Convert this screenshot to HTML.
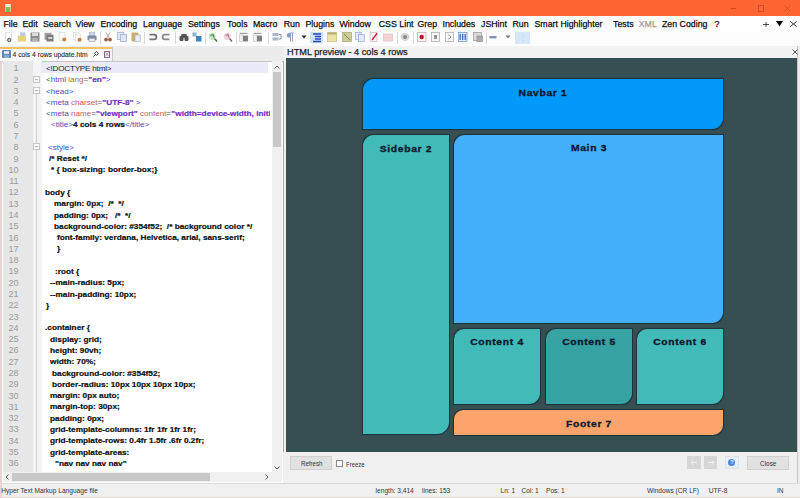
<!DOCTYPE html>
<html><head><meta charset="utf-8">
<style>
*{margin:0;padding:0;box-sizing:border-box}
html,body{width:800px;height:498px;overflow:hidden}
body{position:relative;background:#f0f0f0;font-family:"Liberation Sans",sans-serif;color:#1e1e1e}
.a{position:absolute}
.t{position:absolute;white-space:pre;line-height:1;-webkit-text-stroke:0.25px currentColor}
#title{left:0;top:0;width:800px;height:16.3px;background:#fe6532}
#menu{left:0;top:16px;width:800px;height:15px;background:#fefefe}
#menu .t{font-size:8.8px;top:19.6px;color:#1a1a1a}
#tool{left:0;top:31px;width:800px;height:14.5px;background:#fdfdfd}
.ic{position:absolute;top:33px;width:9px;height:9px}
#tabbar{left:0;top:45.5px;width:284px;height:15px;background:#ececec}
#tab{left:0;top:46.5px;width:112px;height:14.5px;background:#fafafa;border-top:2px solid #f2c264}
#prevhdr{left:283px;top:45.5px;width:517px;height:12.5px;background:#f2f2f2}
#editor{left:0;top:60.5px;width:284px;height:423px;background:#fff;border-top:1px solid #c4c4c4;border-right:1px solid #a4a4a4;border-bottom:1px solid #a4a4a4}
#lnm{left:3px;top:61px;width:30px;height:411px;background:#e7e7e7}
#fold{left:33px;top:61px;width:9px;height:411px;background:#f4f4f4}
#cur{left:41px;top:61.8px;width:227px;height:11.6px;background:#eaeaf8}
.ln{position:absolute;left:3px;width:15.5px;text-align:right;font-size:9px;color:#9a9a9a;line-height:1}
.cl{position:absolute;white-space:pre;font-size:8px;line-height:1;color:#111;font-weight:bold;transform:scaleX(1.032);transform-origin:0 0;-webkit-text-stroke:0.22px currentColor}
.tg{color:#4c4cbc;font-weight:normal;font-size:7.85px;-webkit-text-stroke:0}
.at{color:#c85a5a;font-weight:normal;font-size:7.85px;-webkit-text-stroke:0}
.eq{color:#555;font-weight:normal;font-size:7.85px;-webkit-text-stroke:0}
.vl{color:#7430c8;font-weight:bold;font-size:8px}
.nm{color:#222;font-weight:normal;letter-spacing:-0.2px;font-size:7.85px;-webkit-text-stroke:0}
#vsb{left:272px;top:61px;width:10px;height:411px;background:#f0f0f0}
#vth{left:273px;top:72px;width:8px;height:75px;background:#c8c8c8}
#hsb{left:3px;top:472px;width:279px;height:10px;background:#f0f0f0}
#hth{left:12px;top:473px;width:198px;height:8px;background:#c8c8c8}
#preview{left:286px;top:58px;width:511px;height:394px;background:#354f52}
.bx{position:absolute;font-family:"Liberation Sans",sans-serif;font-weight:bold;font-size:9.8px;color:#0c1a2e;-webkit-text-stroke:0.35px currentColor;text-align:center;letter-spacing:0.65px;transform:scaleX(1.05)}
#bottom{left:283px;top:452px;width:517px;height:31px;background:#f0f0f0}
.btn{position:absolute;background:#e1e1e1;border:1px solid #d4d4d4}
#status{left:0;top:483px;width:800px;height:15px;background:#f0f0f0;border-top:1px solid #dadada}
.st{position:absolute;white-space:pre;font-size:6.6px;line-height:1;color:#333;top:488.5px}
</style></head><body>
<div id="title" class="a"></div>
<div id="menu" class="a"></div>
<div id="tool" class="a"></div>
<div id="tabbar" class="a"></div>
<div id="tab" class="a"></div>
<div id="prevhdr" class="a"></div>
<div class="t" style="left:287px;top:48px;font-size:9.2px;color:#222">HTML preview - 4 cols 4 rows</div>
<div id="editor" class="a"></div>
<div id="lnm" class="a"></div>
<div id="fold" class="a"></div>
<div id="cur" class="a"></div>
<div class="a" style="left:0;top:61px;width:270px;height:411px;overflow:hidden">
<div class="ln" style="top:3.28px">1</div>
<div class="ln" style="top:14.57px">2</div>
<div class="ln" style="top:25.85px">3</div>
<div class="ln" style="top:37.14px">4</div>
<div class="ln" style="top:48.42px">5</div>
<div class="ln" style="top:59.71px">6</div>
<div class="ln" style="top:70.99px">7</div>
<div class="ln" style="top:82.28px">8</div>
<div class="ln" style="top:93.56px">9</div>
<div class="ln" style="top:104.85px">10</div>
<div class="ln" style="top:116.13px">11</div>
<div class="ln" style="top:127.42px">12</div>
<div class="ln" style="top:138.70px">13</div>
<div class="ln" style="top:149.99px">14</div>
<div class="ln" style="top:161.27px">15</div>
<div class="ln" style="top:172.56px">16</div>
<div class="ln" style="top:183.84px">17</div>
<div class="ln" style="top:195.13px">18</div>
<div class="ln" style="top:206.41px">19</div>
<div class="ln" style="top:217.70px">20</div>
<div class="ln" style="top:228.98px">21</div>
<div class="ln" style="top:240.27px">22</div>
<div class="ln" style="top:251.55px">23</div>
<div class="ln" style="top:262.84px">24</div>
<div class="ln" style="top:274.12px">25</div>
<div class="ln" style="top:285.41px">26</div>
<div class="ln" style="top:296.69px">27</div>
<div class="ln" style="top:307.98px">28</div>
<div class="ln" style="top:319.26px">29</div>
<div class="ln" style="top:330.55px">30</div>
<div class="ln" style="top:341.83px">31</div>
<div class="ln" style="top:353.12px">32</div>
<div class="ln" style="top:364.40px">33</div>
<div class="ln" style="top:375.69px">34</div>
<div class="ln" style="top:386.97px">35</div>
<div class="ln" style="top:398.26px">36</div>
<div class="ln" style="top:409.54px">37</div>
<div class="cl" style="left:46px;top:3.93px"><span class="nm">&lt;!DOCTYPE html&gt;</span></div>
<div class="cl" style="left:46px;top:15.21px"><span class="tg">&lt;html</span><span class="at"> lang</span><span class="eq">=</span><span class="vl">&quot;en&quot;</span><span class="tg">&gt;</span></div>
<div class="cl" style="left:46px;top:26.50px"><span class="tg">&lt;head&gt;</span></div>
<div class="cl" style="left:46px;top:37.78px"><span class="tg">&lt;meta</span><span class="at"> charset</span><span class="eq">=</span><span class="vl">&quot;UTF-8&quot;</span><span class="tg"> &gt;</span></div>
<div class="cl" style="left:46px;top:49.07px"><span class="tg">&lt;meta</span><span class="at"> name</span><span class="eq">=</span><span class="vl">&quot;viewport&quot;</span><span class="at"> content</span><span class="eq">=</span><span class="vl">&quot;width=device-width, initial-scale=1.0&quot;</span><span class="tg">&gt;</span></div>
<div class="cl" style="left:50.5px;top:60.35px"><span class="tg">&lt;title&gt;</span>4 cols 4 rows<span class="tg">&lt;/title&gt;</span></div>
<div class="cl" style="left:47.5px;top:82.92px"><span class="tg">&lt;style&gt;</span></div>
<div class="cl" style="left:49px;top:94.21px">/* Reset */</div>
<div class="cl" style="left:50.5px;top:105.49px">* { box-sizing: border-box;}</div>
<div class="cl" style="left:45.4px;top:128.06px">body {</div>
<div class="cl" style="left:54.4px;top:139.35px">margin: 0px;  /*  */</div>
<div class="cl" style="left:54.4px;top:150.63px">padding: 0px;   /*  */</div>
<div class="cl" style="left:54.4px;top:161.92px">background-color: #354f52;  /* background color */</div>
<div class="cl" style="left:56.5px;top:173.20px">font-family: verdana, Helvetica, arial, sans-serif;</div>
<div class="cl" style="left:57px;top:184.49px">}</div>
<div class="cl" style="left:55px;top:207.06px">:root {</div>
<div class="cl" style="left:50px;top:218.34px">--main-radius: 5px;</div>
<div class="cl" style="left:50px;top:229.63px">--main-padding: 10px;</div>
<div class="cl" style="left:45.5px;top:240.91px">}</div>
<div class="cl" style="left:45.4px;top:263.48px">.container {</div>
<div class="cl" style="left:50px;top:274.77px">display: grid;</div>
<div class="cl" style="left:50px;top:286.05px">height: 90vh;</div>
<div class="cl" style="left:50px;top:297.34px">width: 70%;</div>
<div class="cl" style="left:51.5px;top:308.62px">background-color: #354f52;</div>
<div class="cl" style="left:51.5px;top:319.91px">border-radius: 10px 10px 10px 10px;</div>
<div class="cl" style="left:50px;top:331.19px">margin: 0px auto;</div>
<div class="cl" style="left:50px;top:342.48px">margin-top: 30px;</div>
<div class="cl" style="left:50px;top:353.76px">padding: 0px;</div>
<div class="cl" style="left:50px;top:365.05px">grid-template-columns: 1fr 1fr 1fr 1fr;</div>
<div class="cl" style="left:50px;top:376.33px">grid-template-rows: 0.4fr 1.5fr .6fr 0.2fr;</div>
<div class="cl" style="left:50px;top:387.62px">grid-template-areas:</div>
<div class="cl" style="left:55px;top:398.90px">&quot;nav nav nav nav&quot;</div>
<div class="cl" style="left:55px;top:410.19px">&quot;sidebar main main main&quot;</div>
</div>
<div id="vsb" class="a"></div>
<div id="vth" class="a"></div>
<div id="hsb" class="a"></div>
<div id="hth" class="a"></div>
<div id="preview" class="a"></div>
<div class="a" style="left:362.5px;top:78.5px;width:360.7px;height:50.8px;background:#0399fb;border-radius:11px 0 11px 0;box-shadow:0 0 0.8px 0.5px rgba(8,28,44,0.55)"></div>
<div class="bx" style="left:482.9px;width:120px;top:88.00px;line-height:1">Navbar 1</div>
<div class="a" style="left:362.7px;top:134.8px;width:85.9px;height:299.7px;background:#42bab8;border-radius:11px 0 12px 0;box-shadow:0 0 0.8px 0.5px rgba(8,28,44,0.55)"></div>
<div class="bx" style="left:345.6px;width:120px;top:143.50px;line-height:1">Sidebar 2</div>
<div class="a" style="left:454.3px;top:134.6px;width:268.9px;height:188.4px;background:#44b0fc;border-radius:11px 0 11px 0;box-shadow:0 0 0.8px 0.5px rgba(8,28,44,0.55)"></div>
<div class="bx" style="left:528.8px;width:120px;top:143.30px;line-height:1">Main 3</div>
<div class="a" style="left:454.3px;top:328.7px;width:85.7px;height:75.3px;background:#42bab8;border-radius:10px 0 11px 0;box-shadow:0 0 0.8px 0.5px rgba(8,28,44,0.55)"></div>
<div class="bx" style="left:437.1px;width:120px;top:337.40px;line-height:1">Content 4</div>
<div class="a" style="left:545.7px;top:328.6px;width:86.6px;height:75.5px;background:#38a3a3;border-radius:10px 0 11px 0;box-shadow:0 0 0.8px 0.5px rgba(8,28,44,0.55)"></div>
<div class="bx" style="left:529.0px;width:120px;top:337.30px;line-height:1">Content 5</div>
<div class="a" style="left:637.3px;top:328.6px;width:85.9px;height:75.4px;background:#42bab8;border-radius:10px 0 11px 0;box-shadow:0 0 0.8px 0.5px rgba(8,28,44,0.55)"></div>
<div class="bx" style="left:620.2px;width:120px;top:337.30px;line-height:1">Content 6</div>
<div class="a" style="left:454.3px;top:410.0px;width:268.9px;height:24.5px;background:#fca46c;border-radius:9.5px 0 10px 0;box-shadow:0 0 0.8px 0.5px rgba(8,28,44,0.55)"></div>
<div class="bx" style="left:528.8px;width:120px;top:418.70px;line-height:1">Footer 7</div>
<div id="bottom" class="a"></div>
<div id="status" class="a"></div>
<div class="a" style="left:0;top:496.5px;width:800px;height:1.5px;background:#ead8d2"></div>
<div class="a" style="left:797px;top:46px;width:3px;height:437px;background:#f2eaea;border-left:1px solid #c8c8c8"></div>
<div class="a" style="left:0;top:61px;width:2.2px;height:437px;background:#e8d4d4"></div>
<div class="t" style="left:1.2px;top:488.21px;font-size:6.6px;color:#333;-webkit-text-stroke:0">Hyper Text Markup Language file</div>
<div class="t" style="left:375.6px;top:488.21px;font-size:6.6px;color:#333;-webkit-text-stroke:0">length: 3,414</div>
<div class="t" style="left:422px;top:488.21px;font-size:6.6px;color:#333;-webkit-text-stroke:0">lines: 153</div>
<div class="t" style="left:500.5px;top:488.21px;font-size:6.6px;color:#333;-webkit-text-stroke:0">Ln: 1</div>
<div class="t" style="left:521.5px;top:488.21px;font-size:6.6px;color:#333;-webkit-text-stroke:0">Col: 1</div>
<div class="t" style="left:546px;top:488.21px;font-size:6.6px;color:#333;-webkit-text-stroke:0">Pos: 1</div>
<div class="t" style="left:647px;top:488.21px;font-size:6.6px;color:#333;-webkit-text-stroke:0">Windows (CR LF)</div>
<div class="t" style="left:708.75px;top:488.21px;font-size:6.6px;color:#333;-webkit-text-stroke:0">UTF-8</div>
<div class="t" style="left:777px;top:488.21px;font-size:6.6px;color:#333;-webkit-text-stroke:0">IN</div>
<div class="a" style="left:5px;top:4px;width:6px;height:8px;background:linear-gradient(#fff2dc 0,#fff2dc 32%,#86c45a 32%,#78b84c 100%);border-left:0.6px solid #e8c8a0;border-right:0.6px solid #e8c8a0"></div>
<div class="a" style="left:731px;top:8.2px;width:5px;height:0.8px;background:#c8502a"></div>
<div class="a" style="left:757.5px;top:4.5px;width:6px;height:7px;border:0.8px solid #c8502a"></div>
<svg class="a" style="left:784px;top:5px" width="7" height="7" viewBox="0 0 7 7"><path d="M0.5 0.5L6.5 6.5M6.5 0.5L0.5 6.5" stroke="#c8502a" stroke-width="0.8"/></svg>
<div class="a" style="left:99.5px;top:32px;width:1px;height:12px;background:#d8d8d8"></div>
<div class="a" style="left:144.4px;top:32px;width:1px;height:12px;background:#d8d8d8"></div>
<div class="a" style="left:175px;top:32px;width:1px;height:12px;background:#d8d8d8"></div>
<div class="a" style="left:205px;top:32px;width:1px;height:12px;background:#d8d8d8"></div>
<div class="a" style="left:236px;top:32px;width:1px;height:12px;background:#d8d8d8"></div>
<div class="a" style="left:267.6px;top:32px;width:1px;height:12px;background:#d8d8d8"></div>
<div class="a" style="left:397px;top:32px;width:1px;height:12px;background:#d8d8d8"></div>
<div class="a" style="left:413px;top:32px;width:1px;height:12px;background:#d8d8d8"></div>
<div class="a" style="left:486px;top:32px;width:1px;height:12px;background:#d8d8d8"></div>
<svg class="a" style="left:3.8px;top:32px" width="10" height="10" viewBox="0 0 10 10"><rect x="1.5" y="0.5" width="6" height="8" fill="#fff" stroke="#cfcfcf" stroke-width="0.6"/><circle cx="5.2" cy="8" r="1.5" fill="#fff" stroke="#6e6e6e" stroke-width="1.3"/></svg>
<svg class="a" style="left:16.9px;top:32px" width="10" height="10" viewBox="0 0 10 10"><rect x="3" y="0.3" width="5.5" height="6" fill="#c4c8e6"/><path d="M0.8 3.5H4L5 4.5H9V9.5H0.8Z" fill="#e8d274"/></svg>
<svg class="a" style="left:30.3px;top:32px" width="10" height="10" viewBox="0 0 10 10"><rect x="0.5" y="0.5" width="9" height="9" fill="#8c8c8c"/><rect x="2" y="0.8" width="6" height="3.2" fill="#dcdcdc"/><rect x="2.3" y="6" width="5.4" height="3.2" fill="#b4b4b4"/></svg>
<svg class="a" style="left:43.9px;top:32px" width="10" height="10" viewBox="0 0 10 10"><rect x="0.5" y="0.8" width="7" height="7" fill="#a4a4a4"/><rect x="2.5" y="2.8" width="7" height="6.7" fill="#7c7c7c"/><rect x="4.2" y="5" width="4" height="2" fill="#d4d4d4"/></svg>
<svg class="a" style="left:58.2px;top:32px" width="10" height="10" viewBox="0 0 10 10"><rect x="1" y="0.5" width="6" height="8" fill="#fbfbfb" stroke="#d4d4d4" stroke-width="0.6"/><circle cx="6.3" cy="7.6" r="2" fill="#c8803e"/></svg>
<svg class="a" style="left:72.5px;top:32px" width="10" height="10" viewBox="0 0 10 10"><rect x="0.6" y="0.5" width="5" height="7" fill="#fbfbfb" stroke="#d4d4d4" stroke-width="0.6"/><rect x="2.4" y="2" width="5" height="7" fill="#fbfbfb" stroke="#d4d4d4" stroke-width="0.6"/><circle cx="6.6" cy="7.8" r="2" fill="#c8803e"/></svg>
<svg class="a" style="left:86.5px;top:32px" width="10" height="10" viewBox="0 0 10 10"><rect x="2.2" y="0.5" width="5.6" height="3.5" fill="#c8d4e6" stroke="#9aa8bc" stroke-width="0.5"/><rect x="0.5" y="3.6" width="9" height="4.6" fill="#7c8ca4"/><rect x="2" y="6.2" width="6" height="3.3" fill="#ececec" stroke="#8a8a8a" stroke-width="0.5"/></svg>
<svg class="a" style="left:102.8px;top:32px" width="10" height="10" viewBox="0 0 10 10"><path d="M3 0.5L6.2 6M7 0.5L3.8 6" stroke="#a49494" stroke-width="0.8"/><circle cx="3" cy="7.6" r="1.9" fill="#9c5c46"/><circle cx="7" cy="7.6" r="1.9" fill="#9c5c46"/></svg>
<svg class="a" style="left:116.8px;top:32px" width="10" height="10" viewBox="0 0 10 10"><rect x="0.5" y="0.5" width="6" height="7" fill="#dce6f4" stroke="#98aecc" stroke-width="0.7"/><rect x="3.5" y="2.5" width="6" height="7" fill="#dce6f4" stroke="#98aecc" stroke-width="0.7"/></svg>
<svg class="a" style="left:131.0px;top:32px" width="10" height="10" viewBox="0 0 10 10"><rect x="0.5" y="0.5" width="7" height="9" rx="1" fill="#d4aa6c"/><rect x="4" y="3" width="5.5" height="6.5" fill="#e6eef8" stroke="#98aecc" stroke-width="0.6"/></svg>
<svg class="a" style="left:148.3px;top:32px" width="10" height="10" viewBox="0 0 10 10"><path d="M1.5 2.6H6A2.4 2.4 0 0 1 6 7.4H1.5" fill="none" stroke="#747474" stroke-width="1.8"/></svg>
<svg class="a" style="left:161.0px;top:32px" width="10" height="10" viewBox="0 0 10 10"><path d="M8.5 2.6H4A2.4 2.4 0 0 0 4 7.4H8.5" fill="none" stroke="#8a8a8a" stroke-width="1.8"/></svg>
<svg class="a" style="left:178.5px;top:32px" width="10" height="10" viewBox="0 0 10 10"><rect x="0.5" y="4" width="4" height="5" rx="1" fill="#545454"/><rect x="5.5" y="4" width="4" height="5" rx="1" fill="#545454"/><rect x="2.2" y="2" width="5.6" height="4" rx="1" fill="#545454"/></svg>
<svg class="a" style="left:191.8px;top:32px" width="10" height="10" viewBox="0 0 10 10"><rect x="0.5" y="0.5" width="4" height="4" fill="#8ab4d8"/><rect x="4" y="4" width="5.5" height="5.5" fill="#3c84bc"/></svg>
<svg class="a" style="left:208.0px;top:32px" width="10" height="10" viewBox="0 0 10 10"><circle cx="4.2" cy="4.5" r="3.4" fill="#c4e0c4"/><path d="M2.5 3.5L5 2.5L6 5.5" stroke="#4c8c50" stroke-width="1.3" fill="none"/><path d="M6.5 6.5L9 9.5" stroke="#3c6c40" stroke-width="1.3"/></svg>
<svg class="a" style="left:222.8px;top:32px" width="10" height="10" viewBox="0 0 10 10"><circle cx="4.2" cy="4.5" r="3.4" fill="#e8d4dc"/><path d="M2.5 3.5L5 2.5L6 5.5" stroke="#c07080" stroke-width="1.3" fill="none"/><path d="M6.5 6.5L9 9.5" stroke="#905060" stroke-width="1.3"/></svg>
<svg class="a" style="left:239.3px;top:32px" width="10" height="10" viewBox="0 0 10 10"><rect x="0.5" y="0.8" width="8" height="1.2" fill="#a0a0a0"/><rect x="0.5" y="3" width="3.5" height="6.3" fill="#f2f2f2" stroke="#b4b4b4" stroke-width="0.5"/><rect x="4" y="3.6" width="5" height="5.8" fill="#808080"/></svg>
<svg class="a" style="left:253.0px;top:32px" width="10" height="10" viewBox="0 0 10 10"><rect x="0.5" y="0.8" width="8" height="1.2" fill="#a0a0a0"/><rect x="0.5" y="3" width="3.5" height="6.3" fill="#f2f2f2" stroke="#b4b4b4" stroke-width="0.5"/><rect x="4" y="3.6" width="5" height="5.8" fill="#808080"/></svg>
<svg class="a" style="left:271.5px;top:32px" width="10" height="10" viewBox="0 0 10 10"><rect x="0.5" y="1" width="6" height="3" fill="#a8b6ca"/><rect x="0.5" y="5.5" width="6" height="3" fill="#a8b6ca"/><path d="M7 2.5H9V7H7" stroke="#8090a8" fill="none"/></svg>
<svg class="a" style="left:284.5px;top:32px" width="10" height="10" viewBox="0 0 10 10"><path d="M4.5 1H8.5M5.5 1V9.5M7.5 1V9.5" stroke="#8ea0bc" stroke-width="1"/><circle cx="4" cy="3.4" r="2.3" fill="#8ea0bc"/></svg>
<svg class="a" style="left:298.5px;top:32px" width="10" height="10" viewBox="0 0 10 10"><path d="M2.5 3.5H7.5L5 6.5Z" fill="#222"/></svg>
<div class="a" style="left:310px;top:32px;width:12.5px;height:11px;background:#cce2f6"></div>
<svg class="a" style="left:311.5px;top:32.5px" width="10" height="10" viewBox="0 0 10 10"><path d="M1 1H9M3 3.5H9M3 6H9M1 8.5H9" stroke="#2846c0" stroke-width="1.3"/></svg>
<svg class="a" style="left:327.2px;top:32px" width="10" height="10" viewBox="0 0 10 10"><rect x="0.5" y="0.5" width="9" height="9" fill="#ece2a4" stroke="#c8ba7c" stroke-width="0.7"/><rect x="0.5" y="0.5" width="9" height="2" fill="#bcae74"/></svg>
<svg class="a" style="left:341.5px;top:32px" width="10" height="10" viewBox="0 0 10 10"><rect x="0.5" y="0.5" width="9" height="9" fill="#cacc94" stroke="#a4a674" stroke-width="0.7"/><path d="M2 2L8 8" stroke="#8a8c56" stroke-width="1"/></svg>
<svg class="a" style="left:355.0px;top:32px" width="10" height="10" viewBox="0 0 10 10"><rect x="0.5" y="0.5" width="6" height="7" fill="#e2eaf8" stroke="#94acd8" stroke-width="0.7"/><rect x="3.5" y="2.5" width="6" height="7" fill="#e2eaf8" stroke="#94acd8" stroke-width="0.7"/></svg>
<svg class="a" style="left:369.0px;top:32px" width="10" height="10" viewBox="0 0 10 10"><rect x="1" y="0.5" width="7" height="9" fill="#faf5f5" stroke="#c4acac" stroke-width="0.6"/><path d="M8 1.2L3.2 8" stroke="#c43434" stroke-width="1.5"/></svg>
<svg class="a" style="left:382.5px;top:32px" width="10" height="10" viewBox="0 0 10 10"><rect x="0.5" y="2" width="9" height="7" fill="#f2d4d4" stroke="#e2b6b6" stroke-width="0.6"/></svg>
<svg class="a" style="left:400.2px;top:32px" width="10" height="10" viewBox="0 0 10 10"><ellipse cx="5" cy="5" rx="4.5" ry="4" fill="#d4d4d4"/><circle cx="5" cy="5" r="2" fill="#8c8c8c"/></svg>
<svg class="a" style="left:416.7px;top:32px" width="10" height="10" viewBox="0 0 10 10"><rect x="0.5" y="0.5" width="8.5" height="9" fill="#f8f2f2" stroke="#cca4a4" stroke-width="0.7"/><circle cx="4.7" cy="5" r="2.2" fill="#c0102a"/></svg>
<svg class="a" style="left:431.0px;top:32px" width="10" height="10" viewBox="0 0 10 10"><rect x="0.5" y="0.5" width="8" height="9" fill="#f6f6f6" stroke="#a4a4a4" stroke-width="0.7"/><rect x="3" y="3" width="3" height="4" fill="#949494"/></svg>
<svg class="a" style="left:444.6px;top:32px" width="10" height="10" viewBox="0 0 10 10"><rect x="0.5" y="0.5" width="8" height="9" fill="#f6f6f6" stroke="#a4a4a4" stroke-width="0.7"/><path d="M3.3 2.8L6 5L3.3 7.2" stroke="#808080" stroke-width="0.9" fill="none"/></svg>
<svg class="a" style="left:458.2px;top:32px" width="10" height="10" viewBox="0 0 10 10"><rect x="0.5" y="0.5" width="8.5" height="9" fill="#dfe8f6" stroke="#7492c8" stroke-width="0.7"/><path d="M2.2 2V8M4.7 2V8M7.2 2V8" stroke="#3c64b0" stroke-width="1.2"/></svg>
<svg class="a" style="left:473.0px;top:32px" width="10" height="10" viewBox="0 0 10 10"><rect x="0.5" y="0.5" width="8" height="8" fill="#dadada" stroke="#949494" stroke-width="0.7"/><rect x="4" y="4" width="5.5" height="5.5" fill="#acacac" stroke="#848484" stroke-width="0.6"/></svg>
<svg class="a" style="left:488.5px;top:32px" width="10" height="10" viewBox="0 0 10 10"><rect x="0.5" y="4" width="7" height="2.4" fill="#7c94b4"/></svg>
<svg class="a" style="left:502.5px;top:32px" width="10" height="10" viewBox="0 0 10 10"><path d="M2.5 3.5H7.5L5 6.5Z" fill="#7a7a7a"/></svg>
<div class="a" style="left:515.4px;top:32px;width:14.600000000000023px;height:12px;background:#d6e8f8"></div>
<svg class="a" style="left:517.9px;top:33px" width="10" height="10" viewBox="0 0 10 10"><path d="M5 1V9" stroke="#a8c0d8" stroke-width="0.6" stroke-dasharray="1 1"/></svg>
<div class="a" style="left:2.2px;top:50px;width:9px;height:8.3px;background:#5a86b4;border-radius:1px"></div>
<div class="a" style="left:4px;top:50.5px;width:5.4px;height:3px;background:#dfe8f2"></div>
<div class="a" style="left:4px;top:55.3px;width:5.4px;height:3px;background:#8aaed0"></div>
<svg class="a" style="left:93px;top:51px" width="6" height="6" viewBox="0 0 6 6"><path d="M0.5 5.5L2.5 3.5M1.5 2.5L3.5 0.5L5.5 2.5L3.5 4.5Z" stroke="#333" stroke-width="0.9" fill="none"/></svg>
<div class="a" style="left:104px;top:51px;width:6px;height:6.5px;border:1px solid #8a6a8a;background:#f6eef6"></div>
<svg class="a" style="left:105px;top:52px" width="4" height="4.5"><path d="M0.3 0.3L3.7 4.2M3.7 0.3L0.3 4.2" stroke="#9a7a9a" stroke-width="0.7"/></svg>
<div class="a" style="left:112px;top:47px;width:1px;height:14px;background:#c8c8c8"></div>
<div class="a" style="left:36.3px;top:92.97000000000001px;width:1px;height:379.03px;background:#cfcfcf"></div>
<div class="a" style="left:33px;top:75.585px;width:7px;height:7px;border:1px solid #c6c6c6;background:#fbfbfb"></div>
<div class="a" style="left:34.8px;top:78.585px;width:3.5px;height:1px;background:#b4b4b4"></div>
<div class="a" style="left:33px;top:86.87px;width:7px;height:7px;border:1px solid #c6c6c6;background:#fbfbfb"></div>
<div class="a" style="left:34.8px;top:89.87px;width:3.5px;height:1px;background:#b4b4b4"></div>
<div class="a" style="left:33px;top:143.295px;width:7px;height:7px;border:1px solid #c6c6c6;background:#fbfbfb"></div>
<div class="a" style="left:34.8px;top:146.295px;width:3.5px;height:1px;background:#b4b4b4"></div>
<svg class="a" style="left:274px;top:65px" width="6" height="4"><path d="M0.5 3.5L3 1L5.5 3.5" stroke="#555" fill="none"/></svg>
<svg class="a" style="left:274px;top:466px" width="6" height="4"><path d="M0.5 0.5L3 3L5.5 0.5" stroke="#555" fill="none"/></svg>
<svg class="a" style="left:5px;top:474px" width="4" height="6"><path d="M3.5 0.5L1 3L3.5 5.5" stroke="#555" fill="none"/></svg>
<svg class="a" style="left:265px;top:474px" width="4" height="6"><path d="M0.5 0.5L3 3L0.5 5.5" stroke="#555" fill="none"/></svg>
<svg class="a" style="left:791.5px;top:49px" width="6" height="6"><path d="M0.5 0.5L5.5 5.5M5.5 0.5L0.5 5.5" stroke="#444" stroke-width="0.9"/></svg>
<div class="a" style="left:290.2px;top:456.2px;width:41.5px;height:13.4px;background:#e1e1e1;border:1px solid #d0d0d0"></div>
<div class="a" style="left:336px;top:459.7px;width:7.3px;height:7.5px;background:#fff;border:1px solid #8a8a8a"></div>
<div class="a" style="left:687px;top:456px;width:13.5px;height:13px;background:#d6d6d6"></div>
<svg class="a" style="left:690px;top:459px" width="8" height="7"><path d="M1 3.5H7M3.5 1L1 3.5L3.5 6" stroke="#eee" stroke-width="1" fill="none"/></svg>
<div class="a" style="left:704px;top:456px;width:13px;height:13px;background:#d6d6d6"></div>
<svg class="a" style="left:706.5px;top:459px" width="8" height="7"><path d="M1 3.5H7M4.5 1L7 3.5L4.5 6" stroke="#eee" stroke-width="1" fill="none"/></svg>
<div class="a" style="left:725px;top:456px;width:13.5px;height:13px;background:#e8eef6;border:1px solid #dde3ea"></div>
<div class="a" style="left:728.3px;top:459.2px;width:7px;height:7px;background:#4a86dc;border-radius:50%"></div>
<div class="a" style="left:746.7px;top:456px;width:42px;height:13.5px;background:#e1e1e1;border:1px solid #d0d0d0"></div>
<div class="t" style="left:3.5px;top:19.55px;font-size:8.8px;color:#0e0e0e">File</div>
<div class="t" style="left:22.5px;top:19.55px;font-size:8.8px;color:#0e0e0e">Edit</div>
<div class="t" style="left:43px;top:19.55px;font-size:8.8px;color:#0e0e0e">Search</div>
<div class="t" style="left:75.5px;top:19.55px;font-size:8.8px;color:#0e0e0e">View</div>
<div class="t" style="left:100.5px;top:19.55px;font-size:8.8px;color:#0e0e0e">Encoding</div>
<div class="t" style="left:143px;top:19.55px;font-size:8.8px;color:#0e0e0e">Language</div>
<div class="t" style="left:188px;top:19.55px;font-size:8.8px;color:#0e0e0e">Settings</div>
<div class="t" style="left:227px;top:19.55px;font-size:8.8px;color:#0e0e0e">Tools</div>
<div class="t" style="left:253px;top:19.55px;font-size:8.8px;color:#0e0e0e">Macro</div>
<div class="t" style="left:283.75px;top:19.55px;font-size:8.8px;color:#0e0e0e">Run</div>
<div class="t" style="left:305.5px;top:19.55px;font-size:8.8px;color:#0e0e0e">Plugins</div>
<div class="t" style="left:339.5px;top:19.55px;font-size:8.8px;color:#0e0e0e">Window</div>
<div class="t" style="left:378.75px;top:19.55px;font-size:8.8px;color:#0e0e0e">CSS Lint</div>
<div class="t" style="left:417.5px;top:19.55px;font-size:8.8px;color:#0e0e0e">Grep</div>
<div class="t" style="left:442.5px;top:19.55px;font-size:8.8px;color:#0e0e0e">Includes</div>
<div class="t" style="left:481px;top:19.55px;font-size:8.8px;color:#0e0e0e">JSHint</div>
<div class="t" style="left:512.5px;top:19.55px;font-size:8.8px;color:#0e0e0e">Run</div>
<div class="t" style="left:534.5px;top:19.55px;font-size:8.8px;color:#0e0e0e">Smart Highlighter</div>
<div class="t" style="left:613px;top:19.55px;font-size:8.8px;color:#0e0e0e">Tests</div>
<div class="t" style="left:638.75px;top:19.55px;font-size:8.8px;color:#9a9a9a">XML</div>
<div class="t" style="left:662px;top:19.55px;font-size:8.8px;color:#0e0e0e">Zen Coding</div>
<div class="t" style="left:714.5px;top:19.55px;font-size:8.8px;color:#0e0e0e">?</div>
<svg class="a" style="left:763px;top:21.5px" width="6" height="5"><path d="M0 2.5H6M3 0V5" stroke="#222" stroke-width="0.8"/></svg>
<svg class="a" style="left:776.3px;top:21px" width="7" height="5.5"><path d="M0 0H7L3.5 5.5Z" fill="#0a0a0a"/></svg>
<svg class="a" style="left:789.7px;top:21px" width="7" height="6"><path d="M0.3 0.3L6.7 5.7M6.7 0.3L0.3 5.7" stroke="#222" stroke-width="0.9"/></svg>
<div class="t" style="left:12.6px;top:52.09px;font-size:6.75px;color:#2a2a2a;-webkit-text-stroke:0.1px currentColor">4 cols 4 rows update.htm</div>
<div class="t" style="left:300.5px;top:459.94px;font-size:7.4px;color:#333;-webkit-text-stroke:0;transform:scaleX(0.83);transform-origin:0 0">Refresh</div>
<div class="t" style="left:345.5px;top:460.74px;font-size:7.4px;color:#333;-webkit-text-stroke:0;transform:scaleX(0.81);transform-origin:0 0">Freeze</div>
<div class="t" style="left:730.3px;top:460.34px;font-size:5.5px;color:#e8f0ff;-webkit-text-stroke:0;font-weight:bold">?</div>
<div class="t" style="left:759.5px;top:459.94px;font-size:7.4px;color:#333;-webkit-text-stroke:0;transform:scaleX(0.87);transform-origin:0 0">Close</div>
</body></html>
